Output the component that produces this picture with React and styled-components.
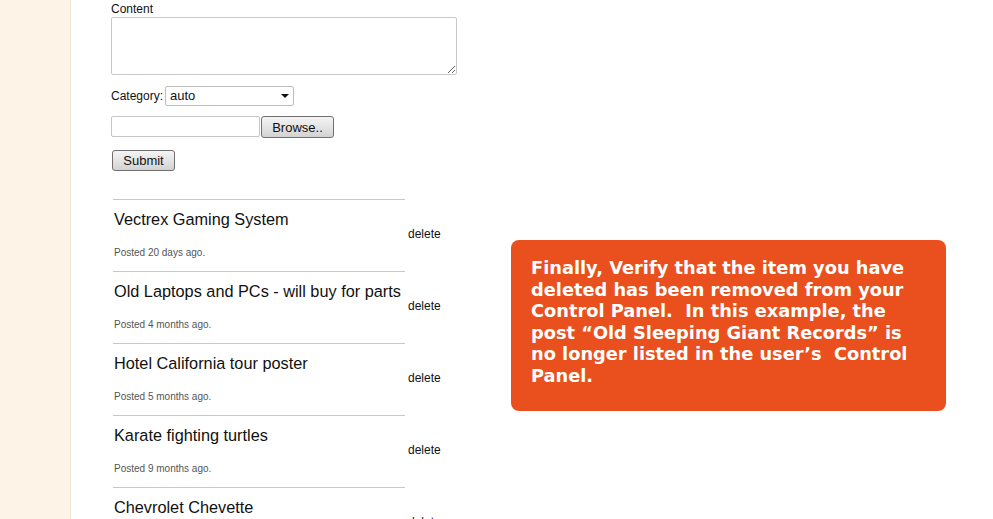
import styled, { createGlobalStyle } from "styled-components";

const GlobalStyle = createGlobalStyle`
    html, body {
        margin: 0;
        padding: 0;
        background: #ffffff;
    }
    body {
        font-family: "Liberation Sans", Arial, sans-serif;
        color: #111;
    }
`

const posts = [
    { title: "Vectrex Gaming System", posted: "Posted 20 days ago." },
    { title: "Old Laptops and PCs - will buy for parts", posted: "Posted 4 months ago." },
    { title: "Hotel California tour poster", posted: "Posted 5 months ago." },
    { title: "Karate fighting turtles", posted: "Posted 9 months ago." },
    { title: "Chevrolet Chevette", posted: "Posted 11 months ago." },
]

const App = () => {
    return (
        <>
            <GlobalStyle />
            <Page>
                <Sidebar />
                <Main>
                    <Form>
                        <Label>Content</Label>
                        <TextArea />
                        <CategoryRow>
                            <span>Category:</span>
                            <SelectWrap>
                                <Select defaultValue="auto">
                                    <option value="auto">auto</option>
                                </Select>
                                <Arrow />
                            </SelectWrap>
                        </CategoryRow>
                        <FileRow>
                            <FileInput type="text" />
                            <Button $w={73} $h={22}>Browse..</Button>
                        </FileRow>
                        <Button $w={63} $h={21} $ml={1}>Submit</Button>
                    </Form>
                    <List>
                        {posts.map((post) => (
                            <Post key={post.title} title={post.title} posted={post.posted} />
                        ))}
                    </List>
                </Main>
                <Callout>
                    Finally, Verify that the item you have<br />
                    deleted has been removed from your<br />
                    Control Panel.{"  "}In this example, the<br />
                    post “Old Sleeping Giant Records” is<br />
                    no longer listed in the user’s{"  "}Control<br />
                    Panel.
                </Callout>
            </Page>
        </>
    )
}

const Post = ({ title, posted }) => {
    return (
        <Row>
            <Info>
                <Title>{title}</Title>
                <Posted>{posted}</Posted>
            </Info>
            <Delete>delete</Delete>
        </Row>
    )
}

const Page = styled.div`
    position: relative;
    display: flex;
    width: 993px;
    height: 519px;
    overflow: hidden;
`

const Sidebar = styled.div`
    width: 70px;
    flex-shrink: 0;
    background: #fdf3e6;
    border-right: 1px solid #f1e6d6;
`

const Main = styled.div`
    padding-left: 40px;
    display: flex;
    flex-direction: column;
`

const Form = styled.div`
    display: flex;
    flex-direction: column;
    align-items: flex-start;
    font-size: 12px;
`

const Label = styled.div`
    padding-top: 1px;
    height: 16px;
    line-height: 16px;
`

const TextArea = styled.textarea`
    box-sizing: border-box;
    width: 346px;
    height: 58px;
    border: 1px solid #c9c9c9;
    border-radius: 2px;
    margin: 0;
    padding: 2px;
`

const CategoryRow = styled.div`
    margin-top: 10px;
    display: flex;
    align-items: center;
    gap: 2px;
    font-size: 12px;
    height: 21px;
`

const SelectWrap = styled.div`
    position: relative;
`

const Select = styled.select`
    appearance: none;
    box-sizing: border-box;
    width: 129px;
    height: 20px;
    margin: 0;
    padding: 0 0 0 4px;
    border: 1px solid #bdbdbd;
    border-radius: 2px;
    background: #fff;
    font-family: "Liberation Sans", Arial, sans-serif;
    font-size: 13px;
    color: #111;
`

const Arrow = styled.span`
    position: absolute;
    right: 5px;
    top: 8px;
    width: 0;
    height: 0;
    border-left: 4px solid transparent;
    border-right: 4px solid transparent;
    border-top: 4px solid #111;
    pointer-events: none;
`

const FileRow = styled.div`
    margin-top: 10px;
    display: flex;
    align-items: flex-start;
    gap: 1px;
`

const FileInput = styled.input`
    box-sizing: border-box;
    width: 149px;
    height: 21px;
    margin: 0;
    border: 1px solid #c6c6c6;
    border-radius: 2px;
`

const Button = styled.button`
    box-sizing: border-box;
    width: ${(p) => p.$w}px;
    height: ${(p) => p.$h}px;
    margin: 0 0 0 ${(p) => p.$ml || 0}px;
    padding: 0;
    border: 1px solid #707070;
    border-radius: 3px;
    background: linear-gradient(#f4f4f4, #e4e4e4 50%, #d2d2d2);
    font-family: "Liberation Sans", Arial, sans-serif;
    font-size: 13px;
    color: #111;
    ${FileRow} + & {
        margin-top: 12px;
    }
`

const List = styled.div`
    margin-top: 28px;
    display: flex;
    flex-direction: column;
`

const Row = styled.div`
    display: flex;
    height: 72px;
`

const Info = styled.div`
    width: 291px;
    margin-left: 2px;
    border-top: 1px solid #c8c8c8;
    padding-left: 1px;
`

const Title = styled.div`
    margin-top: 10px;
    font-size: 16.3px;
    line-height: 18px;
    white-space: nowrap;
    color: #111;
`

const Posted = styled.div`
    margin-top: 19px;
    font-size: 10px;
    line-height: 12px;
    color: #555;
`

const Delete = styled.div`
    margin-top: 28px;
    margin-left: 3px;
    font-size: 12px;
    line-height: 14px;
    height: 14px;
    color: #111;
`

const Callout = styled.div`
    position: absolute;
    left: 511px;
    top: 240px;
    width: 435px;
    height: 171px;
    box-sizing: border-box;
    padding: 17px 20px 0;
    background: #e9501e;
    border-radius: 8px;
    color: #fff;
    font-family: "DejaVu Sans", Verdana, sans-serif;
    font-weight: bold;
    font-size: 17.8px;
    line-height: 21.5px;
    white-space: pre;
`

export default App;
